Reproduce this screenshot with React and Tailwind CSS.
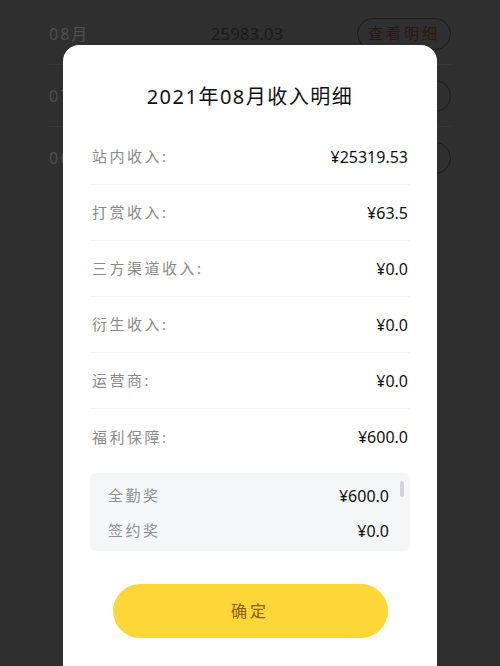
import React from "react";

const font = { fontFamily: '"Noto Sans", "Noto Sans CJK SC", sans-serif' };

const bgRows = [
  { m: "08月", v: "25983.03" },
  { m: "07月", v: "26120.50" },
  { m: "06月", v: "24875.12" },
];

const rows = [
  ["站内收入:", "¥25319.53"],
  ["打赏收入:", "¥63.5"],
  ["三方渠道收入:", "¥0.0"],
  ["衍生收入:", "¥0.0"],
  ["运营商:", "¥0.0"],
];

export default function App() {
  return (
    <div className="relative w-[500px] h-[666px] overflow-hidden bg-[#2f2f2f]" style={font}>
      {/* background list (dimmed) */}
      <div className="flex flex-col pt-[3px] px-[49px]">
        {bgRows.map((r, i) => (
          <div key={i} className={"h-[62px] flex items-center " + (i < 2 ? "border-b border-[#373737]" : "")}>
            <div className="w-[70px] text-[16px] tracking-[2px] text-[#505050]">{r.m}</div>
            <div className="flex-1 text-center text-[17px] text-[#1a1a1a] pl-[18px]">{r.v}</div>
            <div className="w-[94px] h-[32px] rounded-full border border-[#1c1c1c] flex items-center justify-center text-[15px] tracking-[3px] text-[#2a1c08]">
              查看明细
            </div>
          </div>
        ))}
      </div>

      {/* modal */}
      <div className="absolute left-[63px] top-[45px] w-[374px] h-[660px] rounded-[16px] bg-white flex flex-col">
        <div className="pt-[38px] text-center text-[20px] leading-[28px] text-[#111] tracking-[1.5px]">
          2021年08月收入明细
        </div>
        <div className="mt-[18px] px-[27px] flex flex-col">
          {rows.map(([l, v], i) => (
            <div key={i} className="h-[56px] flex items-center justify-between px-[2px] border-b border-[#f1f1f1]">
              <span className="text-[15px] tracking-[2.5px] text-[#8a8a8a]">{l}</span>
              <span className="text-[16px] text-[#111]">{v}</span>
            </div>
          ))}
          <div className="h-[56px] flex items-center justify-between px-[2px]">
            <span className="text-[15px] tracking-[2.5px] text-[#8a8a8a]">福利保障:</span>
            <span className="text-[16px] text-[#111]">¥600.0</span>
          </div>
          <div className="relative mt-[8px] h-[78px] overflow-hidden rounded-[6px] bg-[#f5f6f8] pt-[5px] pl-[18px] pr-[21px]">
            <div className="h-[35px] flex items-center justify-between">
              <span className="text-[15px] tracking-[2.5px] text-[#8f8f8f]">全勤奖</span>
              <span className="text-[16px] text-[#111]">¥600.0</span>
            </div>
            <div className="h-[35px] flex items-center justify-between">
              <span className="text-[15px] tracking-[2.5px] text-[#8f8f8f]">签约奖</span>
              <span className="text-[16px] text-[#111]">¥0.0</span>
            </div>
            <div className="absolute right-[6px] top-[8px] w-[4px] h-[16px] rounded-full bg-[#d2d4d8]"></div>
          </div>
        </div>
        <div className="mt-[33px] mx-auto w-[275px] h-[54px] rounded-full bg-[#fdd637] flex items-center justify-center text-[16px] tracking-[3px] text-[#8a5a06]">
          确定
        </div>
      </div>
    </div>
  );
}
